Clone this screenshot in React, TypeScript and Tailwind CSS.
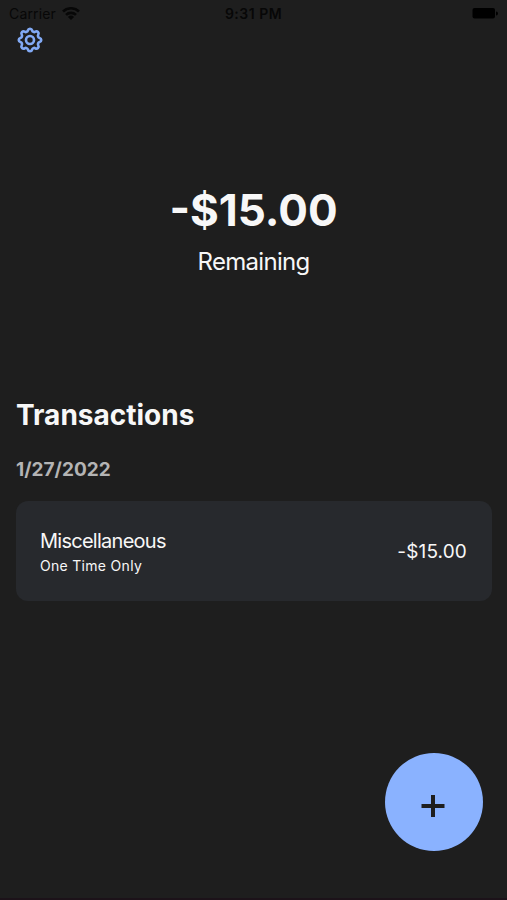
import React from 'react';

type TransactionType = {
  category: string,
  frequency: string,
  amount: string,
}

type TransactionGroupProps = {
  date: string,
  transactions: TransactionType[],
}

const StatusBar = () => (
  <div className="flex h-[26px] items-center justify-between pr-[9px] pl-[9px] text-[14px] text-[#070707]">
    <div className="flex w-[90px] items-center gap-[6px]">
      <span className="tracking-[0.15px]">Carrier</span>
      <svg className="h-[13px] w-[18px]" viewBox="0 0 18 13" fill="none" stroke="currentColor" strokeWidth="2.6">
        <path d="M1 4.5a11.5 11.5 0 0 1 16 0" />
        <path d="M4 7.9a7.2 7.2 0 0 1 10 0" />
        <path d="M9 13 5.9 9.9a4.4 4.4 0 0 1 6.2 0Z" fill="currentColor" stroke="none" />
      </svg>
    </div>
    <span className="font-semibold tracking-[0.5px]">9:31 PM</span>
    <div className="flex w-[90px] justify-end">
      <svg className="h-[11px] w-[26px] text-black" viewBox="0 0 26 11" fill="currentColor">
        <rect x="0.5" width="22.5" height="10.5" rx="2" />
        <path d="M24 3.5a2 2 0 0 1 0 4Z" />
      </svg>
    </div>
  </div>
);

const SettingsIcon = () => (
  <svg className="h-[30px] w-[30px] text-[#82aaf5]" viewBox="0 0 24 24" fill="none" stroke="currentColor" strokeWidth="2.1" strokeLinecap="round" strokeLinejoin="round">
    <path d="M10.325 4.317c.426-1.756 2.924-1.756 3.35 0a1.724 1.724 0 0 0 2.573 1.066c1.543-.94 3.31.826 2.37 2.37a1.724 1.724 0 0 0 1.065 2.572c1.756.426 1.756 2.924 0 3.35a1.724 1.724 0 0 0-1.066 2.573c.94 1.543-.826 3.31-2.37 2.37a1.724 1.724 0 0 0-2.572 1.065c-.426 1.756-2.924 1.756-3.35 0a1.724 1.724 0 0 0-2.573-1.066c-1.543.94-3.31-.826-2.37-2.37a1.724 1.724 0 0 0-1.065-2.572c-1.756-.426-1.756-2.924 0-3.35a1.724 1.724 0 0 0 1.066-2.573c-.94-1.543.826-3.31 2.37-2.37.996.608 2.296.07 2.572-1.065Z" />
    <circle cx="12" cy="12" r="3.2" />
  </svg>
);

const TransactionGroup = ({ date, transactions }: TransactionGroupProps) => (
  <div>
    <h3 className="mt-[23px] text-[19px] leading-7 font-bold text-[#b4b4b4]">{date}</h3>
    {transactions.map((transaction) => (
      <div key={transaction.category} className="mt-[17px] flex h-[100px] items-center justify-between rounded-xl bg-[#27292d] pt-[2px] pr-[25px] pl-6">
        <div>
          <p className="text-[20px] leading-7 tracking-[-0.74px]">{transaction.category}</p>
          <p className="text-[14px] leading-[22px] tracking-[0.3px]">{transaction.frequency}</p>
        </div>
        <p className="text-[19px] tracking-[0.15px]">{transaction.amount}</p>
      </div>
    ))}
  </div>
);

const App = () => (
  <div className="flex h-screen flex-col border-b-2 border-[#1c1219] bg-[#1e1e1e] font-['Inter',sans-serif] text-[#f7f7f7]">
    <StatusBar />
    <button type="button" aria-label="Settings" className="-mt-px ml-[15px] w-fit"><SettingsIcon /></button>

    <header className="mt-[129px] text-center">
      <h1 className="text-[44px] leading-[52px] font-bold">-$15.00</h1>
      <p className="mt-[10px] text-[24px] leading-8 tracking-[-0.7px]">Remaining</p>
    </header>

    <main className="mt-[119px] pr-[15px] pl-4">
      <h2 className="text-[28px] leading-9 font-bold">Transactions</h2>
      <TransactionGroup
        date="1/27/2022"
        transactions={[{ category: 'Miscellaneous', frequency: 'One Time Only', amount: '-$15.00' }]}
      />
    </main>

    <button type="button" aria-label="Add transaction" className="mt-auto mr-6 mb-[47px] flex h-[98px] w-[98px] items-center justify-center self-end rounded-full bg-[#8ab2ff] pt-[7px] pr-[2px] text-[#1e1e1e]">
      <svg className="h-6 w-6" viewBox="0 0 24 24" stroke="currentColor" strokeWidth="4">
        <path d="M12 1v22M0.5 12h23" />
      </svg>
    </button>
  </div>
);

export default App;
